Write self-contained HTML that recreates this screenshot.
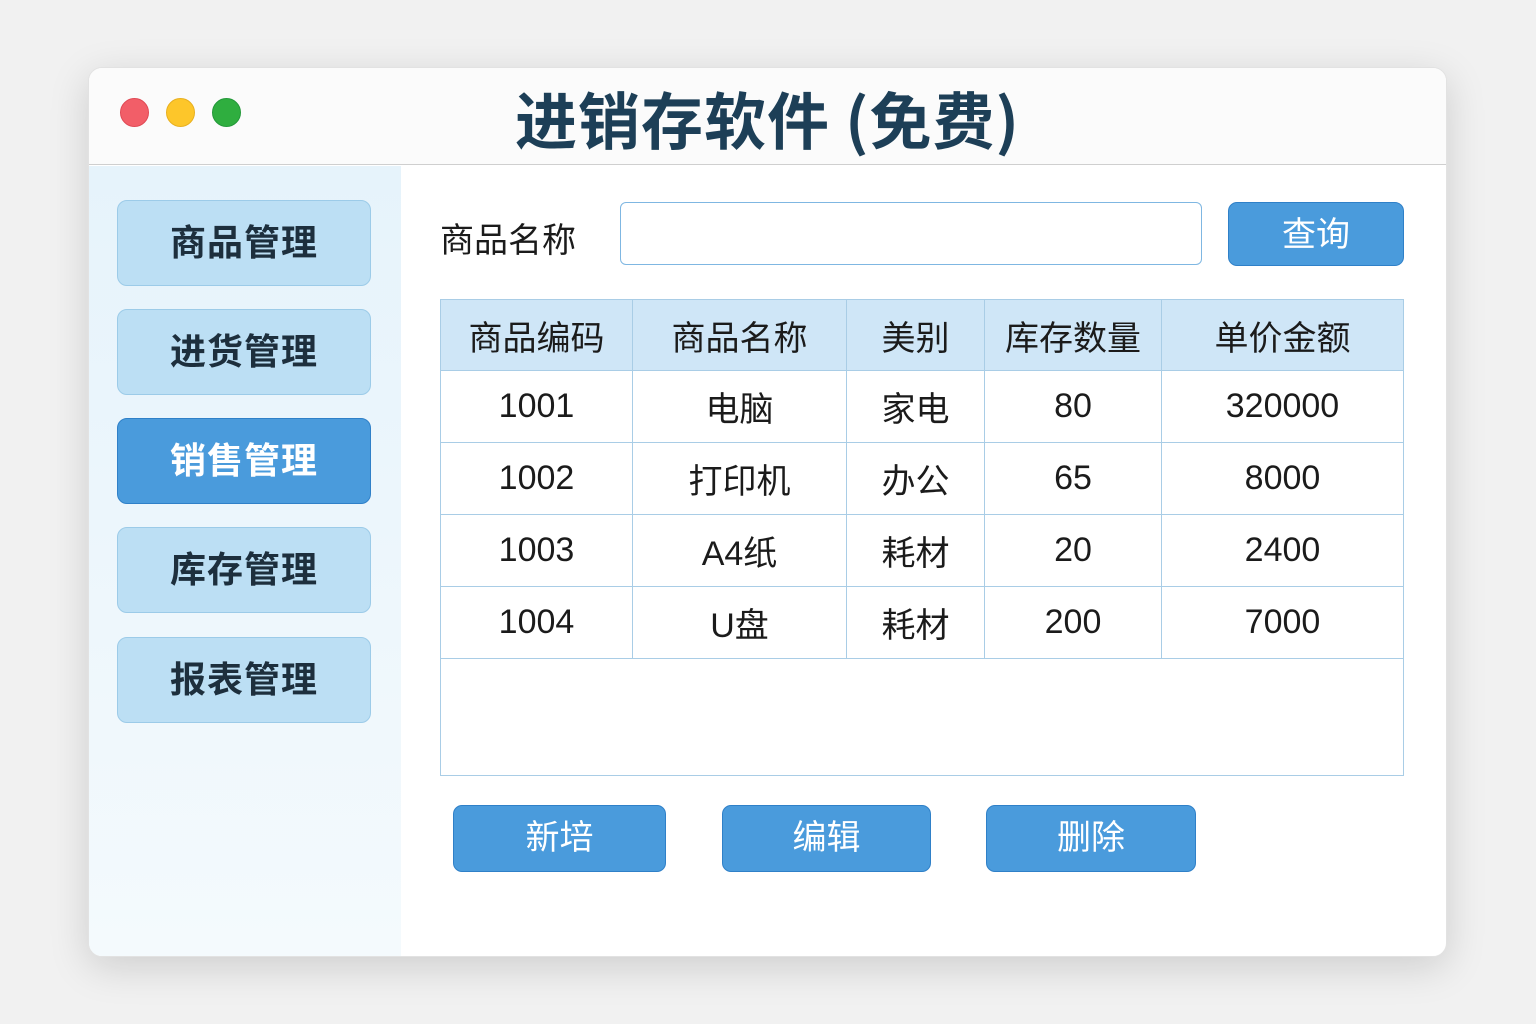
<!DOCTYPE html>
<html><head><meta charset="utf-8"><style>
*{box-sizing:border-box;margin:0;padding:0}
body{width:1536px;height:1024px;background:#f1f1f1;font-family:"Liberation Sans","Noto Sans CJK SC",sans-serif;position:relative;overflow:hidden}
.win{position:absolute;left:88px;top:67px;width:1359px;height:890px;background:#fff;border-radius:14px;box-shadow:0 10px 40px rgba(0,0,0,.15);overflow:hidden;border:1px solid #e2e2e2}
.bar{position:absolute;left:0;top:0;width:100%;height:97px;background:#fbfbfb;border-bottom:1px solid #cfcfcf}
.dot{position:absolute;top:30px;width:29px;height:29px;border-radius:50%}
.title{position:absolute;left:0;width:100%;text-align:center;top:4px;font-size:62px;font-weight:bold;color:#1d3f57;letter-spacing:1px;font-family:"Noto Sans CJK SC",sans-serif}
.side{position:absolute;left:0;top:98px;width:312px;height:792px;background:linear-gradient(#e6f3fb,#f4fafd)}
.nb{position:absolute;left:28px;width:254px;height:86px;border-radius:10px;background:#bcdff4;border:1px solid #9ccbe8;font-size:36px;font-weight:bold;color:#1d2f3d;text-align:center;line-height:84px;letter-spacing:1px}
.nb.on{background:#4a9bdc;border-color:#2f80c8;color:#fff}
.abs{position:absolute}
table{position:absolute;left:351px;top:231px;width:964px;border-collapse:collapse;font-size:34px;color:#1b1b1b}
td,th{border:1px solid #a9cde6;text-align:center;height:72px;font-weight:normal}
th{background:#cfe6f7;height:71px}
.btn{position:absolute;height:67px;background:#4a9bdc;border:1px solid #2f80c8;border-radius:9px;color:#fff;font-size:34px;text-align:center;line-height:64px}
</style></head><body>
<div class="win">
<div class="bar">
<div class="dot" style="left:31px;background:#f25e68;border:1px solid #e04a55"></div>
<div class="dot" style="left:77px;background:#fdc62a;border:1px solid #e8b020"></div>
<div class="dot" style="left:123px;background:#2fae3f;border:1px solid #24993a"></div>
<div class="title">进销存软件 (免费)</div>
</div>
<div class="side">
<div class="nb" style="top:34px">商品管理</div>
<div class="nb" style="top:143px">进货管理</div>
<div class="nb on" style="top:252px">销售管理</div>
<div class="nb" style="top:361px">库存管理</div>
<div class="nb" style="top:471px">报表管理</div>
</div>
<div class="abs" style="left:351px;top:145px;font-size:34px;color:#1b1b1b">商品名称</div>
<div class="abs" style="left:531px;top:134px;width:582px;height:63px;border:1.5px solid #7fb7e2;border-radius:6px"></div>
<div class="btn" style="left:1139px;top:134px;width:176px;height:64px">查询</div>
<table>
<tr><th style="width:192px">商品编码</th><th style="width:214px">商品名称</th><th style="width:138px">美别</th><th style="width:177px">库存数量</th><th>单价金额</th></tr>
<tr><td>1001</td><td>电脑</td><td>家电</td><td>80</td><td>320000</td></tr>
<tr><td>1002</td><td>打印机</td><td>办公</td><td>65</td><td>8000</td></tr>
<tr><td>1003</td><td>A4纸</td><td>耗材</td><td>20</td><td>2400</td></tr>
<tr><td>1004</td><td>U盘</td><td>耗材</td><td>200</td><td>7000</td></tr>
<tr><td colspan="5" style="height:117px"></td></tr>
</table>
<div class="btn" style="left:364px;top:737px;width:213px">新培</div>
<div class="btn" style="left:633px;top:737px;width:209px">编辑</div>
<div class="btn" style="left:897px;top:737px;width:210px">删除</div>
</div>
</body></html>
